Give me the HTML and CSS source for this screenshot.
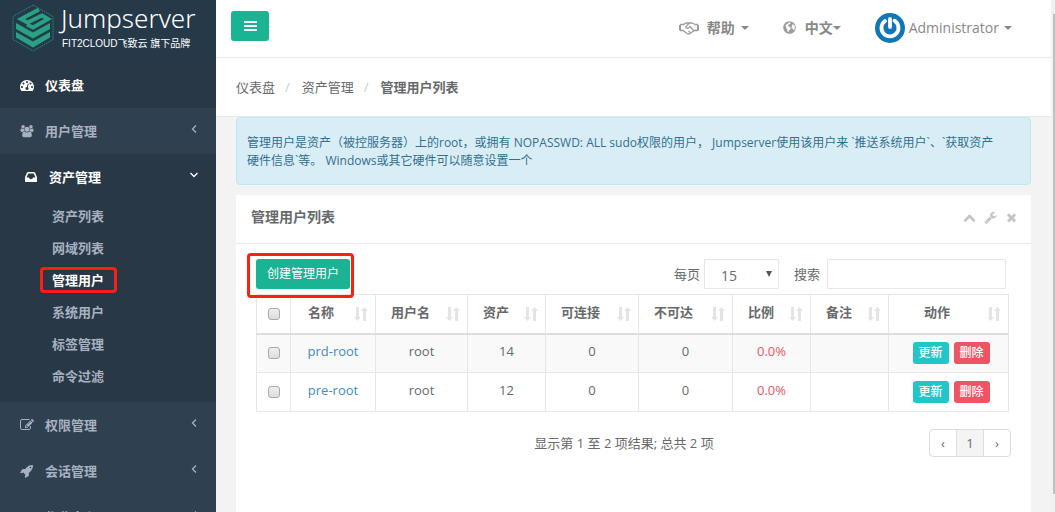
FILE: index.html
```html
<!DOCTYPE html>
<html lang="zh-CN">
<head>
<meta charset="utf-8">
<title>管理用户列表</title>
<link rel="stylesheet" href="styles.css">
</head>
<body>
<svg class="sprite" aria-hidden="true">
  <symbol id="sort" viewBox="0 0 14 14"><path d="M2 0h3v10H7l-3.500 4L0 10h2zM9 14h3V4H14l-3.500-4L7 4h2z"/></symbol>
  <symbol id="angle" viewBox="0 0 8 10"><path d="M6 1.500L2.500 5 6 8.500" fill="none" stroke="currentColor" stroke-width="1.300"/></symbol>
</svg>
<div class="app">
  <nav class="sidebar">
    <div class="brand">
      <svg class="brand-mark" viewBox="0 0 42 48">
        <path d="M21 1L41 12.500v23L21 47 1 35.500v-23z" fill="none" stroke="#278f7c" stroke-width="1" stroke-dasharray="1.500 1"/>
        <path d="M27 5.500L9 15l6.500 3.500L30 11.500l6 3.500-15 8.500-6-3" fill="none" stroke="#2aa185" stroke-width="4"/>
        <g fill="#2aa185">
          <path d="M4 19l17 9.500L38 19v6L21 34.500 4 25z"/>
          <path d="M4 28l17 9.500L38 28v5.500L21 43.500 4 33.500z"/>
        </g>
      </svg>
      <div class="brand-text"><span class="brand-name">Jumpserver</span><span class="brand-sub">FIT2CLOUD飞致云 旗下品牌</span></div>
    </div>
    <ul class="menu">
      <li><a class="item bright" href="#"><svg class="icon" viewBox="0 0 1792 1792"><path d="M384 1152q0-53-37.500-90.500t-90.500-37.500-90.500 37.500-37.500 90.500 37.500 90.500 90.500 37.500 90.500-37.500 37.500-90.500zm192-448q0-53-37.500-90.500t-90.500-37.500-90.500 37.500-37.500 90.500 37.500 90.500 90.500 37.500 90.500-37.500 37.500-90.500zm428 481l101-382q6-26-7.500-48.500t-38.500-29.500-48 6.500-30 39.500l-101 382q-60 5-107 43.500t-63 98.500q-20 77 20 146t117 89 146-20 89-117q16-60-6-117t-72-91zm660-33q0-53-37.500-90.500t-90.500-37.500-90.500 37.500-37.500 90.500 37.500 90.500 90.500 37.500 90.500-37.500 37.500-90.500zm-640-640q0-53-37.500-90.500t-90.500-37.500-90.500 37.500-37.500 90.500 37.500 90.500 90.500 37.500 90.500-37.500 37.500-90.500zm448 192q0-53-37.500-90.500t-90.500-37.500-90.500 37.500-37.500 90.500 37.500 90.500 90.500 37.500 90.500-37.500 37.500-90.500zm320 448q0 261-141 483-19 29-54 29h-1402q-35 0-54-29-141-221-141-483 0-182 71-348t191-286 286-191 348-71 348 71 286 191 191 286 71 348z"/></svg>仪表盘</a></li>
      <li class="shade"><a class="item" href="#"><svg class="icon" viewBox="0 0 2048 1792"><path d="M657 896q-162 5-265 128h-134q-82 0-138-40.500t-56-118.500q0-353 124-353 6 0 43.500 21t97.500 42.500 119 21.500q67 0 133-23-5 37-5 66 0 139 81 256zm1071 637q0 120-73 189.500t-194 69.500h-874q-121 0-194-69.500t-73-189.500q0-53 3.500-103.500t14-109 26.500-108.500 43-97.500 62-81 85.500-53.500 111.500-20q10 0 43 21.500t73 48 107 48 135 21.500 135-21.500 107-48 73-48 43-21.500q61 0 111.500 20t85.500 53.500 62 81 43 97.500 26.500 108.500 14 109 3.500 103.500zm-1024-1277q0 106-75 181t-181 75-181-75-75-181 75-181 181-75 181 75 75 181zm704 384q0 159-112.500 271.500t-271.500 112.500-271.500-112.500-112.500-271.500 112.500-271.500 271.500-112.500 271.500 112.500 112.500 271.500zm576 225q0 78-56 118.500t-138 40.500h-134q-103-123-265-128 81-117 81-256 0-29-5-66 66 23 133 23 59 0 119-21.500t97.500-42.500 43.500-21q124 0 124 353zm-128-609q0 106-75 181t-181 75-181-75-75-181 75-181 181-75 181 75 75 181z"/></svg>用户管理<svg class="angle"><use href="#angle"/></svg></a></li>
      <li class="open">
        <a class="item bright" href="#"><svg class="icon" viewBox="0 0 1792 1792"><path d="M1151 960h316q-1-3-2.500-8t-2.500-8l-212-496h-708l-212 496q-1 2-2.500 8t-2.500 8h316l95 192h320zm513 30v482q0 26-19 45t-45 19h-1408q-26 0-45-19t-19-45v-482q0-62 25-123l238-552q10-25 36.500-42t52.500-17h832q26 0 52.500 17t36.500 42l238 552q25 61 25 123z"/></svg>资产管理<svg class="angle down"><use href="#angle"/></svg></a>
        <ul class="submenu">
          <li><a href="#">资产列表</a></li>
          <li><a href="#">网域列表</a></li>
          <li><a class="current" href="#">管理用户</a></li>
          <li><a href="#">系统用户</a></li>
          <li><a href="#">标签管理</a></li>
          <li><a href="#">命令过滤</a></li>
        </ul>
      </li>
      <li class="shade"><a class="item" href="#"><svg class="icon" viewBox="0 0 1792 1792"><path d="M888 1184l116-116-152-152-116 116v56h96v96h56zm440-720q-16-16-33 1l-350 350q-17 17-1 33t33-1l350-350q17-17 1-33zm80 594v190q0 119-84.500 203.500t-203.500 84.500h-832q-119 0-203.500-84.500t-84.500-203.500v-832q0-119 84.500-203.500t203.500-84.500h832q63 0 117 25 15 7 18 23 3 17-9 29l-49 49q-14 14-32 8-23-6-45-6h-832q-66 0-113 47t-47 113v832q0 66 47 113t113 47h832q66 0 113-47t47-113v-126q0-13 9-22l64-64q15-15 35-7t20 29zm-96-738l288 288-672 672h-288v-288zm444 132l-92 92-288-288 92-92q28-28 68-28t68 28l152 152q28 28 28 68t-28 68z"/></svg>权限管理<svg class="angle"><use href="#angle"/></svg></a></li>
      <li class="shade"><a class="item" href="#"><svg class="icon" viewBox="0 0 1792 1792"><path d="M1440 448q0-40-28-68t-68-28-68 28-28 68 28 68 68 28 68-28 28-68zm224-288q0 249-75.500 430.500t-253.500 360.500q-81 80-195 176l-20 379q-2 16-16 26l-384 224q-7 4-16 4-12 0-23-9l-64-64q-13-14-8-32l85-276-281-281-276 85q-3 1-9 1-14 0-23-9l-64-64q-17-19-5-39l224-384q10-14 26-16l379-20q96-114 176-195 188-187 358-258t431-71q14 0 24 9.500t10 22.500z"/></svg>会话管理<svg class="angle"><use href="#angle"/></svg></a></li>
      <li class="shade"><a class="item" href="#"><svg class="icon" viewBox="0 0 14 14"><path d="M1 9h12v4H1z"/></svg>作业中心<svg class="angle"><use href="#angle"/></svg></a></li>
    </ul>
  </nav>

  <main class="page">
    <header class="topbar">
      <button class="toggle" type="button" aria-label="菜单"><svg viewBox="0 0 13 11"><path d="M0 0h13v2H0zM0 4h13v2H0zM0 8h13v2H0z"/></svg></button>
      <div class="top-links">
        <a class="help" href="#"><svg class="shake" viewBox="0 0 20 14" fill="none" stroke="currentColor"><path d="M1 4v5.500M19 4v5.500" stroke-width="2"/><path stroke-width="1.300" d="M1 3.500h3.500L7 2h3M16 3.500h3M1 9.500h3l4 3c1 .6 2.200.6 3 0l4.500-3H19M16 3.500L13 2h-2.500L7 5.500c-.3 1.800 1.600 2.200 2.800 1.200L11 5.500l3.500 3.800M9.500 10l1.500 1.500"/></svg><span>帮助</span><i class="caret"></i></a>
        <a class="lang" href="#"><svg class="globe" viewBox="0 0 13 13"><circle cx="6.500" cy="6.500" r="6.300"/><path d="M6.500 1.200l1.300.8-1.300 1.300-1 .3-.5 1.400 1.500.7 1.300 1-.4 1.500-1.400 1.300-.6 1.700-1-1-.2-2-1.200-1.200.2-1.500-1-1M9 3.500l2 .3.900 2-.3 2.200-1.100 1.500-.5-1.500-1.400-1 .2-1.500z" fill="#fff"/></svg><span>中文</span><i class="caret"></i></a>
        <a class="user" href="#"><svg class="avatar" viewBox="0 0 30 30"><circle cx="15" cy="15" r="15" fill="#0f76b8"/><path d="M10 8a8.500 8.500 0 1 0 9.500-.3M15 6v8" fill="none" stroke="#fff" stroke-width="3.800" stroke-linecap="round"/></svg><span>Administrator</span><i class="caret"></i></a>
      </div>
    </header>
    <ol class="crumbs"><li><a href="#">仪表盘</a></li><li><a href="#">资产管理</a></li><li><strong>管理用户列表</strong></li></ol>

    <div class="content">
      <p class="notice">管理用户是资产（被控服务器）上的root，或拥有 NOPASSWD: ALL sudo权限的用户， Jumpserver使用该用户来 `推送系统用户`、`获取资产硬件信息`等。 Windows或其它硬件可以随意设置一个</p>
      <section class="panel">
        <div class="panel-head">
          <h1>管理用户列表</h1>
          <div class="tools">
            <button type="button" aria-label="折叠"><svg viewBox="0 0 1792 1792"><path d="M1683 1331l-166 165q-19 19-45 19t-45-19l-531-531-531 531q-19 19-45 19t-45-19l-166-165q-19-19-19-45.500t19-45.500l742-741q19-19 45-19t45 19l742 741q19 19 19 45.500t-19 45.500z"/></svg></button>
            <button type="button" aria-label="设置"><svg viewBox="0 0 1792 1792"><path d="M448 1472q0-26-19-45t-45-19-45 19-19 45 19 45 45 19 45-19 19-45zm644-420l-682 682q-37 37-90 37-52 0-91-37l-106-108q-38-36-38-90 0-53 38-91l681-681q39 98 114.500 173.500t173.500 114.500zm634-435q0 39-23 106-47 134-164.500 217.500t-258.500 83.500q-185 0-316.500-131.500t-131.500-316.500 131.500-316.500 316.500-131.500q58 0 121.500 16.500t107.500 46.500q16 11 16 28t-16 28l-293 169v224l193 107q5-3 79-48.500t135.500-81 70.500-35.500q15 0 23.500 10t8.500 25z"/></svg></button>
            <button type="button" aria-label="关闭"><svg viewBox="0 0 1792 1792"><path d="M1490 1322q0 40-28 68l-136 136q-28 28-68 28t-68-28l-294-294-294 294q-28 28-68 28t-68-28l-136-136q-28-28-28-68t28-68l294-294-294-294q-28-28-28-68t28-68l136-136q28-28 68-28t68 28l294 294 294-294q28-28 68-28t68 28l136 136q28 28 28 68t-28 68l-294 294 294 294q28 28 28 68z"/></svg></button>
          </div>
        </div>
        <div class="panel-body">
          <div class="controls">
            <div class="create-wrap"><button class="create" type="button">创建管理用户</button></div>
            <div class="filters">
              <label for="size">每页</label>
              <div class="select"><select id="size"><option>15</option><option>25</option></select></div>
              <label for="search">搜索</label>
              <input id="search" type="search">
            </div>
          </div>
          <table>
            <colgroup><col class="c-check"><col class="c-name"><col class="c-user"><col class="c-asset"><col class="c-link"><col class="c-mid"><col class="c-asset"><col class="c-asset"><col></colgroup>
            <thead><tr>
              <th><input type="checkbox" aria-label="全选"></th>
              <th><div>名称<svg><use href="#sort"/></svg></div></th>
              <th><div>用户名<svg><use href="#sort"/></svg></div></th>
              <th><div>资产<svg><use href="#sort"/></svg></div></th>
              <th><div>可连接<svg><use href="#sort"/></svg></div></th>
              <th><div>不可达<svg><use href="#sort"/></svg></div></th>
              <th><div>比例<svg><use href="#sort"/></svg></div></th>
              <th><div>备注<svg><use href="#sort"/></svg></div></th>
              <th><div class="wide">动作<svg><use href="#sort"/></svg></div></th>
            </tr></thead>
            <tbody>
              <tr><td class="tick"><input type="checkbox" aria-label="prd-root"></td><td><a href="#">prd-root</a></td><td>root</td><td>14</td><td>0</td><td>0</td><td class="rate">0.0%</td><td></td><td class="tick"><div class="actions"><button class="update" type="button">更新</button><button class="delete" type="button">删除</button></div></td></tr>
              <tr><td class="tick"><input type="checkbox" aria-label="pre-root"></td><td><a href="#">pre-root</a></td><td>root</td><td>12</td><td>0</td><td>0</td><td class="rate">0.0%</td><td></td><td class="tick"><div class="actions"><button class="update" type="button">更新</button><button class="delete" type="button">删除</button></div></td></tr>
            </tbody>
          </table>
          <div class="foot">
            <span class="info">显示第 1 至 2 项结果; 总共 2 项</span>
            <div class="pager"><a href="#">‹</a><a class="on" href="#">1</a><a href="#">›</a></div>
          </div>
        </div>
      </section>
    </div>
  </main>
  <div class="scroll"><div class="thumb"></div></div>
</div>
</body>
</html>
```

FILE: styles.css
```css
* { box-sizing: border-box; }
body {
  margin: 0;
  font: 13px/18px "Open Sans", "Noto Sans CJK SC", sans-serif;
  color: #676a6c;
}
a { color: inherit; text-decoration: none; }
ul, ol { list-style: none; margin: 0; padding: 0; }
button, input, select { font: inherit; color: inherit; margin: 0; }
svg { fill: currentColor; flex: none; }
.sprite { position: absolute; width: 0; height: 0; }
.app { display: flex; height: 100vh; overflow: hidden; background: #f3f3f4; }

.sidebar { flex: none; width: 216px; background: #2f4050; color: #a7b1c2; overflow: hidden; }
.brand { display: flex; gap: 7px; height: 62px; padding: 4px 12px 0; background: #263949; color: #fff; }
.brand-mark { width: 42px; height: 48px; }
.brand-text { display: flex; flex-direction: column; white-space: nowrap; }
.brand-name { font: 300 26px/28px "Noto Sans", sans-serif; }
.brand-sub { font: 10px/24px "Liberation Sans", "Noto Sans CJK SC", sans-serif; padding-left: 1px; }
.menu { background: #293846; font-weight: 600; }
.item { display: flex; align-items: center; height: 46px; padding: 0 18px 0 20px; }
.shade { background: #2f4050; }
.bright, .current { color: #fff; }
.icon { width: 14px; height: 14px; margin-right: 11px; }
.angle { width: 8px; height: 10px; margin-left: auto; margin-bottom: 4px; }
.down { transform: rotate(-90deg); }
.open { padding-bottom: 7px; }
.open .item { padding-left: 24px; }
.submenu { padding-top: 3px; }
.submenu a { display: flex; align-items: center; width: 77px; height: 26px; margin: 0 0 6px 40px; padding-left: 12px; }
.submenu .current { border: 3px solid #ff1e12; border-radius: 4px; padding-left: 9px; }

.page { flex: 1; min-width: 0; display: flex; flex-direction: column; }
.topbar { display: flex; align-items: flex-start; justify-content: space-between; height: 58px; padding: 11px 39px 0 15px; background: #fff; border-bottom: 1px solid #e7eaec; }
.toggle { display: grid; place-items: center; width: 38px; height: 30px; border: 0; border-radius: 3px; background: #1ab394; color: #fff; }
.toggle svg { width: 13px; height: 11px; }
.top-links { display: flex; align-items: center; height: 33px; color: #888; font-size: 14px; font-weight: 600; }
.top-links a { display: flex; align-items: center; }
.shake { width: 20px; height: 14px; margin-right: 8px; fill: none; color: #999c9e; }
.globe { width: 13px; height: 13px; margin-right: 9px; color: #999c9e; }
.caret { border: 4px solid transparent; border-top-color: #888; border-bottom: 0; }
.help .caret { margin-left: 6px; }
.lang { margin: 0 34px; }
.user { font-weight: 400; }
.user .caret { margin-left: 5px; }
.avatar { width: 30px; height: 30px; margin-right: 4px; }

.crumbs { display: flex; height: 59px; padding: 20px 20px 0; background: #fff; border-bottom: 1px solid #e7eaec; }
.crumbs li + li::before { content: "/"; padding: 0 12px 0 10px; color: #ccc; }
.crumbs strong { font-weight: 600; }
.content { flex: 1; display: flex; flex-direction: column; gap: 10px; padding: 0 20px; }
.notice { margin: 0; padding: 16px 34px 14px 10px; font-size: 12px; background: #d9edf7; border: 1px solid #bce8f1; border-radius: 4px; color: #31708f; }
.panel { flex: 1; background: #fff; }
.panel-head { display: flex; justify-content: space-between; align-items: center; height: 49px; padding: 0 13px 4px 15px; border-bottom: 1px solid #e7eaec; }
h1 { margin: 0; font-size: 14px; font-weight: 600; }
.tools { display: flex; gap: 8px; }
.tools button { padding: 0; border: 0; background: none; color: #c4c4c4; line-height: 0; }
.tools svg { width: 13px; height: 13px; }
.panel-body { padding: 9px 20px 0 11px; }
.controls { display: flex; justify-content: space-between; height: 41px; }
.create-wrap { width: 107px; height: 45px; padding: 3px 6px; border: 3px solid #ff1e12; border-radius: 4px; position: relative; }
.create { width: 94px; height: 30px; padding: 0; border: 0; border-radius: 3px; background: #1ab394; color: #fff; font-size: 12px; }
.filters { display: flex; align-items: center; height: 30px; margin: 6px 5px 0 0; }
select, input[type=search] { height: 30px; border: 1px solid #e5e6e7; border-radius: 1px; background: #fff; }
.select { position: relative; margin: 0 15px 0 4px; }
.select::after { content: ""; position: absolute; right: 7px; top: 12px; border: 3px solid transparent; border-top: 6px solid #555; border-bottom: 0; pointer-events: none; }
select { appearance: none; display: block; width: 75px; padding: 4px 16px 0; font-size: 14px; }
input[type=search] { width: 179px; margin-left: 7px; }

table { width: calc(100% - 11px); margin-left: 9px; table-layout: fixed; border-collapse: collapse; text-align: center; }
th, td { border: 1px solid #e7e7e7; padding: 0; height: 39px; }
td { padding-bottom: 4px; }
td.tick { padding-bottom: 0; }
th { border-bottom: 2px solid #ddd; font-weight: 600; }
th div { display: flex; align-items: center; padding: 0 7px 4px 15px; }
th:nth-child(2) div { padding-left: 17px; }
th .wide { padding-left: 35px; }
th svg { width: 14px; height: 14px; margin: 5px 0 0 auto; color: #e4e4e4; }
tbody tr:first-child { background: #f9f9f9; }
td a { color: #428bca; }
.rate { color: #ed5565; }
.c-check { width: 34px; }
.c-name { width: 85px; }
.c-user { width: 92px; }
.c-asset { width: 78px; }
.c-link { width: 93px; }
.c-mid { width: 94px; }
input[type=checkbox] { appearance: none; display: block; width: 12px; height: 12px; margin: 0 auto; border: 1px solid #aaa; border-radius: 3px; background: linear-gradient(#eee, #ddd); }
.actions { display: flex; justify-content: center; gap: 5px; padding-left: 5px; }
.actions button { width: 36px; height: 22px; padding: 0; border: 0; border-radius: 3px; color: #fff; font-size: 12px; font-weight: 500; }
.actions .update { background: #23c6c8; }
.actions .delete { background: #ed5565; }
.foot { display: flex; align-items: center; margin: 17px 0 0 72px; }
.info { margin-left: auto; }
.pager { display: flex; margin-left: auto; border: 1px solid #ddd; border-radius: 4px; }
.pager a { width: 26px; line-height: 26px; text-align: center; }
.pager .on { width: 28px; background: #f4f4f4; border: solid #ddd; border-width: 0 1px; }
.scroll { flex: none; width: 4px; padding: 14px 0 18px 2px; background: #f1f1f1; }
.thumb { height: 100%; background: #c1c1c1; }
```
